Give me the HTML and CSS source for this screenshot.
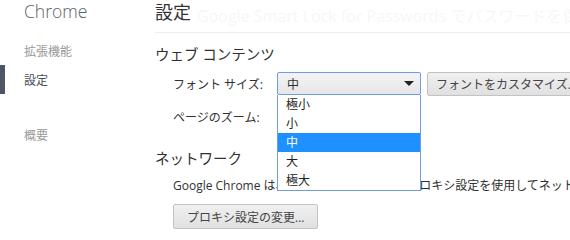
FILE: index.html
```html
<!DOCTYPE html>
<html lang="ja">
<head>
  <meta charset="UTF-8">
  <title>設定</title>
  <link rel="stylesheet" href="styles.css">
</head>
<body>
  <div class="page">
    <div class="nav">
      <div class="nav-title">Chrome</div>
      <ul class="nav-list">
        <li>拡張機能</li>
        <li class="selected">設定</li>
        <li class="gap">概要</li>
      </ul>
    </div>
    <div class="main">
      <div class="header">
        <h1>設定</h1>
        <span class="ghost">Google Smart Lock for Passwords でパスワードを保存するよう提示</span>
      </div>

      <div class="section">
        <h3>ウェブ コンテンツ</h3>
        <div class="row">
          <span class="label">フォント サイズ:</span>
          <div class="select-wrap">
            <div class="select">
              <span>中</span>
              <span class="arrow"></span>
            </div>
            <ul class="menu">
              <li>極小</li>
              <li>小</li>
              <li class="hl">中</li>
              <li>大</li>
              <li>極大</li>
            </ul>
          </div>
          <button class="btn">フォントをカスタマイズ...</button>
        </div>
        <div class="row zoom">
          <span class="label">ページのズーム:</span>
        </div>
      </div>

      <div class="section network">
        <h3>ネットワーク</h3>
        <p class="desc">Google Chrome は、パソコンのシステムのプロキシ設定を使用してネットワークに接続しています。</p>
        <button class="btn proxy">プロキシ設定の変更...</button>
      </div>
    </div>
  </div>
</body>
</html>
```

FILE: styles.css
```css
*{
  margin:0;
  padding:0;
}
html,body{
  width:570px;
  height:240px;
  overflow:hidden;
  background:#fff;
}
body{
  font-family:"Open Sans","Noto Sans CJK JP",sans-serif;
  font-size:12px;
  color:#303030;
}
.page{
  display:flex;
}
.nav{
  width:155px;
  flex:none;
}
.nav-title{
  padding:0 0 0 24px;
  height:24px;
  line-height:22px;
  font-size:17.5px;
  font-weight:300;
  color:#5c6166;
}
.nav-list{
  list-style:none;
  margin-top:13px;
}
.nav-list li{
  height:28px;
  color:#999;
  border-left:5px solid transparent;
  padding-left:19px;
  display:flex;
  align-items:center;
}
.nav-list li.selected{
  border-left-color:#4e5665;
  color:#464e5a;
  height:29px;
}
.nav-list li.gap{
  margin-top:27px;
}
.main{
  flex:1;
  min-width:0;
}
.header{
  position:relative;
  height:32px;
  border-bottom:1px solid #eee;
  white-space:nowrap;
}
.header h1{
  font-size:18px;
  font-weight:normal;
  line-height:24px;
  color:#333;
  position:relative;
  z-index:1;
}
.ghost{
  position:absolute;
  left:42px;
  top:3px;
  font-size:16px;
  color:#f7f7f7;
}
.section{
  white-space:nowrap;
}
.section h3{
  font-size:14.5px;
  font-weight:normal;
  color:#303030;
  margin-top:12px;
  line-height:20px;
}
.network h3{
  margin-top:21px;
}
.row{
  display:flex;
  align-items:center;
  margin-top:7px;
  padding-left:18px;
  height:23px;
}
.label{
  width:104px;
  flex:none;
}
.row.zoom{
  margin-top:10px;
}
.select-wrap{
  position:relative;
  width:144px;
  flex:none;
}
.select{
  height:23px;
  box-sizing:border-box;
  border:1px solid #6f9ce3;
  border-radius:2px;
  background:linear-gradient(#f4f4f4,#e6e6e6);
  display:flex;
  align-items:center;
  justify-content:space-between;
  padding:0 6px 0 9px;
}
.arrow{
  width:0;
  height:0;
  border-left:5px solid transparent;
  border-right:5px solid transparent;
  border-top:5px solid #222;
}
.menu{
  position:absolute;
  left:0;
  top:23px;
  width:144px;
  box-sizing:border-box;
  list-style:none;
  background:#fff;
  border:1px solid #6f9ce3;
  border-top:none;
  z-index:2;
}
.menu li{
  height:19px;
  line-height:19px;
  padding-left:8px;
  color:#222;
}
.menu li.hl{
  background:#1e90ff;
  color:#fff;
}
.btn{
  font-family:inherit;
  font-size:12px;
  color:#444;
  height:24px;
  padding:0 8px;
  margin-left:6px;
  border:1px solid #c3c3c3;
  border-radius:2px;
  background:linear-gradient(#f0f0f0,#e0e0e0);
  white-space:nowrap;
  flex:none;
}
.desc{
  margin-top:7px;
  padding-left:18px;
  line-height:20px;
}
.btn.proxy{
  margin:8px 0 0 18px;
  height:25px;
  padding:0 13px;
}
```
